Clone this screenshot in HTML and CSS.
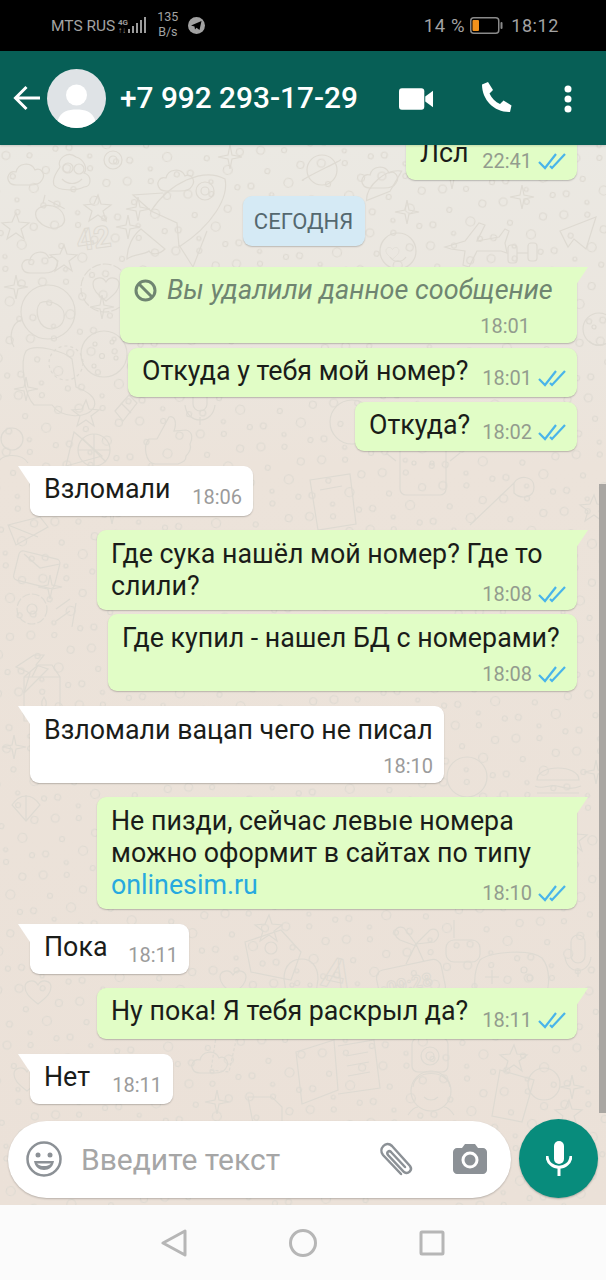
FILE: index.html
```html
<!DOCTYPE html>
<html lang="ru">
<head>
<meta charset="utf-8">
<title>WhatsApp</title>
<link rel="stylesheet" href="styles.css">
</head>
<body>
<div class="app">
  <div class="status">
    <span class="carrier">MTS RUS</span>
    <svg class="signal" width="30" height="20" viewBox="0 0 30 20"><text x="1" y="9" class="net">4G</text><text x="1" y="17" class="net">↑↓</text><path d="M12 13v4M16 10v7M20 7v10M24 4v13M28 1v16" stroke="#9c9c9c" stroke-width="2" fill="none"/></svg>
    <span class="speed">135<br>B/s</span>
    <svg class="tg" width="17" height="17" viewBox="0 0 17 17"><circle cx="8.500" cy="8.500" r="8.500" fill="#a2a2a2"/><path d="M3 8.500l10.500-4.500-2 9-3-2.200-1.500 1.700-.5-3z" fill="#000"/></svg>
    <span class="grow"></span>
    <span class="pct">14 %</span>
    <svg class="battery" width="33" height="17" viewBox="0 0 33 17"><rect x=".75" y=".75" width="28" height="15.500" rx="3" fill="none" stroke="#8a8a8a" stroke-width="1.500"/><rect x="2.500" y="3" width="6.500" height="11" rx="1" fill="#f2921c"/><rect x="30.500" y="5" width="2" height="7" rx="1" fill="#8a8a8a"/></svg>
    <span class="clock">18:12</span>
  </div>

  <header class="head">
    <svg class="back" width="28" height="26" viewBox="0 0 28 26"><path d="M27 13H3M13.500 2 2.500 13l11 11" fill="none" stroke="#fff" stroke-width="3"/></svg>
    <svg class="avatar" width="59" height="59" viewBox="0 0 59 59"><circle cx="29.500" cy="29.500" r="29.500" fill="#dfe3e6"/><circle cx="29.500" cy="26" r="10.500" fill="#fff"/><path d="M10.500 52c3-10 11-11.500 19-11.500s16 1.500 19 11.500a29.500 29.500 0 0 1-38 0z" fill="#fff"/></svg>
    <h1 class="title">+7 992 293-17-29</h1>
    <svg class="video" width="35" height="23" viewBox="0 0 36 23"><rect x="0" y="0" width="26" height="22" rx="3" fill="#fff"/><path d="M27 8.500 35 2.500v17l-8-6z" fill="#fff"/></svg>
    <svg class="phone" width="32" height="32" viewBox="0 0 32 32"><path d="M1 3.500 7 1l5 8-3.500 3.500c2 4.500 6 8.500 10.500 10.500L22.500 19.500l8 5-1.500 6.500C13.500 31.500 1 19 1 3.500z" fill="#fff"/></svg>
    <svg class="dots" width="10" height="28" viewBox="0 0 10 28"><circle cx="5" cy="4" r="3.500" fill="#fff"/><circle cx="5" cy="14" r="3.500" fill="#fff"/><circle cx="5" cy="24" r="3.500" fill="#fff"/></svg>
  </header>

  <main class="chat">
    <svg class="wall" width="606" height="1060" viewBox="0 0 606 1060">
      <defs>
        <pattern id="specks" width="62" height="58" patternUnits="userSpaceOnUse" patternTransform="rotate(12)">
          <circle cx="8" cy="9" r="4"/><circle cx="31" cy="4" r="2.500"/><circle cx="50" cy="15" r="3.500"/><circle cx="19" cy="28" r="2.500"/><circle cx="42" cy="35" r="4.500"/><circle cx="6" cy="46" r="3"/><circle cx="28" cy="50" r="2"/><circle cx="55" cy="50" r="2.500"/>
        </pattern>
        <path id="cloud" d="M4 26c-5-6 0-13 6-11 2-9 15-11 19-2 6-3 11 4 7 10-2 4-7 5-12 5H11c-3 0-5 0-7-2z"/>
        <path id="star" d="M14 0l3 9 10 1-8 6 3 10-8-6-9 6 3-10-8-6 10-1z"/>
        <path id="spark" d="M12 0l2 10 10 2-10 2-2 10-2-10-10-2 10-2z"/>
        <path id="heart" d="M13 24C4 17 0 13 0 7c0-6 9-9 13-2 4-7 13-4 13 2 0 6-4 10-13 17z"/>
        <g id="book"><path d="M0 12 38 0l4 50-36 14zM42 6l36-6 6 48-42 6"/><path d="M50 16l22-4M51 26l22-4M52 36l22-4"/></g>
        <g id="face"><circle cx="23" cy="26" r="20"/><path d="M5 22C6 4 40 4 42 22M0 50c4-6 8-8 10-8M46 50c-4-6-8-8-10-8"/><path d="M16 32c4 4 10 4 14 0"/></g>
        <g id="pad"><path d="M4 10c10-8 50-12 62-2 10 12 8 38-2 48-6 2-12-10-16-14H24C18 46 10 58 4 54-4 40-2 20 4 10z"/><path d="M16 20v14M9 27h14"/><circle cx="48" cy="20" r="3"/><circle cx="54" cy="28" r="3"/></g>
        <g id="burger"><path d="M2 20C2 4 44 4 44 20zM0 26c8 4 14-2 22 0s14 4 24 0M2 33h42M4 40h38l-4 6H8z"/></g>
      </defs>
      <rect width="606" height="1060" fill="url(#specks)"/>
      <g class="doodle">
        <use href="#cloud" x="6" y="12"/><use href="#cloud" x="156" y="18"/><use href="#cloud" x="20" y="100"/><use href="#cloud" x="360" y="15" />
        <g transform="translate(52 8)"><path d="M8 14C4 6 16-3 24 4c8 2 12 12 8 16 8 2 8 14 0 14-8 4-26 4-30-2-2-6 2-12 6-18z"/><circle cx="16" cy="15" r="5"/><circle cx="27" cy="16" r="5"/><path d="M10 26c6 6 14 6 20 0"/></g>
        <g transform="translate(103 4)"><circle cx="10" cy="11" r="9"/><circle cx="10" cy="11" r="4"/></g>
        <use href="#star" x="84" y="50"/><use href="#star" x="2" y="68"/><use href="#spark" x="126" y="52"/><use href="#spark" x="116" y="70"/><use href="#spark" x="218" y="0"/><use href="#star" x="50" y="100"/><use href="#spark" x="4" y="130"/><use href="#spark" x="90" y="150"/>
        <g transform="translate(135 28)"><path d="M16 38C34 10 68-6 90 6c4 18-12 46-46 68L42 50z"/><circle cx="70" cy="18" r="9"/><circle cx="70" cy="18" r="4"/><path d="M16 38-2 22l30-2M44 72l14 22 14-36M6 56c-8 6-14 18-14 30 8-6 18-4 22-8 2 4 10 4 16-2z"/></g>
        <text x="78" y="106" class="dtext" transform="rotate(-8 78 106)">42</text>
        <g transform="translate(36 18) rotate(40 12 50)"><path d="M2 52c2-8 14-16 24-10s2 18-8 20-18-2-16-10zM4 40l18-4M2 46l-4-8"/></g>
        <g transform="translate(80 118)"><circle cx="25" cy="25" r="24" stroke-dasharray="9 2"/><use href="#heart" x="13" y="14"/></g>
        <g transform="translate(6 140)"><circle cx="42" cy="27" r="27"/><path d="M34 18c-6 8-2 26 12 26 14-2 16-18 6-24-6-4-14-4-18-2zM15 35C6 38 2 52 8 62M20 66c-6 10-2 44 8 54h18c10 14 36 14 42 2 4-10-8-16-18-20l-4-28c-8-8-38-16-46-8z"/><circle cx="60" cy="78" r="17" stroke-dasharray="3 3"/></g>
        <g transform="translate(80 185)"><circle cx="24" cy="24" r="23"/><circle cx="15" cy="14" r="2"/><circle cx="32" cy="12" r="2"/><circle cx="22" cy="26" r="2.500"/><circle cx="36" cy="28" r="2"/><circle cx="14" cy="36" r="2"/></g>
        <use href="#spark" x="14" y="232"/><use href="#star" x="72" y="255"/>
        <g transform="translate(145 270)"><path d="M12 24 24 2c6-2 8 6 5 14l12-1c8 2 6 10 4 14 2 6-2 10-4 12 0 6-4 6-8 8H10C0 48-2 30 4 24z"/></g>
        <g transform="translate(185 240)"><rect x="8" y="0" width="14" height="26" rx="7"/><path d="M0 20c2 20 28 20 30 0M15 32v8"/></g>
        <g transform="translate(60 285)"><path d="M14 2 42 26 6 36z"/><circle cx="34" cy="20" r="16"/><path d="M34 4v32M18 20h32M22 8l24 24"/></g>
        <g transform="translate(115 250)"><path d="M0 16 14 0l8 8L8 26z"/><path d="M6 8l10 10"/></g>
        <g transform="translate(0 282)"><circle cx="12" cy="12" r="11"/><path d="M-2 36c4-10 24-10 30 0"/></g>

        <g transform="translate(300 5)"><circle cx="22" cy="20" r="15"/><path d="M4 30C-8 34 46 8 40 10"/></g>
        <g transform="translate(360 48) rotate(-40)"><path d="M0 10c10-12 36-12 46 0l-22 8z"/></g>
        <use href="#spark" x="440" y="20"/><use href="#star" x="540" y="8"/><use href="#spark" x="395" y="55"/><use href="#spark" x="510" y="40"/>
        <g transform="translate(376 92)"><circle cx="22" cy="14" r="18"/><use href="#heart" x="6" y="6" transform="scale(.5) translate(14 14)"/><path d="M14 20c4 6 12 6 16 0"/></g>
        <g transform="translate(445 78)"><path d="M0 24 20 18 34 0l6 2-8 16 22-4 6-8 4 2-4 12 2 10-6-2-24 0-8 16-6-2 2-14-14-2z"/></g>
        <g transform="translate(470 92)"><rect x="38" y="8" width="9" height="18" rx="3"/><rect x="58" y="6" width="9" height="18" rx="3"/><path d="M47 16h11"/></g>
        <g transform="translate(560 72)"><path d="M0 14 36 0 26 32 14 22l-6 8z"/></g>
        <g transform="translate(585 170)"><circle cx="14" cy="14" r="16"/><circle cx="9" cy="12" r="2"/><path d="M4 26c6 6 14 6 20 0"/></g>
        <g transform="translate(330 255)"><circle cx="22" cy="22" r="22"/></g>
        <g transform="translate(400 300)"><rect x="0" y="0" width="46" height="50" rx="6"/><path d="M12 0V-10M34 0v-10M-4 16-14 8M50 16l10-8"/><circle cx="14" cy="18" r="2"/><circle cx="32" cy="18" r="2"/></g>
        <g transform="translate(310 335)"><path d="M0 0 40-6 46 44 8 50zM10 10l22-4"/></g>
        <g transform="translate(470 330)"><path d="M0 50 44 8M44 8c4-8 20-8 20 4s-14 12-20 6z"/></g>
        <g transform="translate(580 350)"><use href="#star" x="0" y="0"/></g>
        <use href="#star" x="36" y="332"/><use href="#spark" x="100" y="355"/>
        <g transform="translate(8 370)"><path d="M0 10 32 2 40 12 8 30zM0 10l30 12"/></g>
        <g transform="translate(20 405)"><rect width="42" height="30" rx="4" transform="rotate(14)"/><path d="M4 4l16 14L40 14" /></g>
        <g transform="translate(16 448)"><circle cx="16" cy="16" r="15" stroke-dasharray="8 2"/><circle cx="16" cy="16" r="5"/></g>
        <use href="#spark" x="38" y="430"/>
        <g transform="translate(56 450)"><path d="M0 14 14 4M0 26l14-10M16 32l4-24"/></g>
        <g transform="translate(16 510)"><path d="M18 0 0 12l14 6-6 20 24-24-12-4 8-10z"/></g>
        <g transform="translate(20 518)"><path d="M4 14 18 2h14l8 12v44H4z"/><path d="M4 14h36M18 2l-6 12"/><path d="M24 34c-4 6-2 10 0 10s4-4 0-10z"/></g>
        <use href="#spark" x="2" y="590"/><use href="#spark" x="584" y="615"/>
        <g transform="translate(535 615)"><use href="#burger"/></g>
        <g transform="translate(485 650)"><path d="M10 10c-6 10-10 22-10 30h26C24 28 22 16 16 10z"/><circle cx="13" cy="6" r="4"/></g>
        <use href="#star" x="560" y="680"/>
        <g transform="translate(12 640)"><path d="M0 20C8 8 20 8 28 20L14 36z"/><path d="M14 36V10"/></g>
        <g transform="translate(445 610)"><circle cx="22" cy="22" r="20"/></g>
        <g transform="translate(255 770)"><use href="#star"/></g>
        <g transform="translate(245 785)"><path d="M0 12 36 0l20 22-10 28-40-8z"/><circle cx="26" cy="18" r="6"/></g>
        <text x="320" y="840" class="dtext big" transform="rotate(12 320 840)">A</text>
        <g transform="translate(280 810)"><path d="M4 24C4 8 14 4 22 4s16 6 16 20l-2 14H6z"/><circle cx="12" cy="30" r="2"/><circle cx="30" cy="30" r="2"/></g>
        <g transform="translate(392 775)"><path d="M24 24 12 8C4 4-2 14 8 20l16 6zM24 24 38 10c8-4 12 6 4 12zM24 24 14 44M24 24 32 42"/></g>
        <g transform="translate(434 775)"><rect width="34" height="22" rx="8" transform="translate(12 20)"/><path d="M20 0v18"/></g>
        <g transform="translate(378 820)"><rect width="66" height="36" rx="8" transform="rotate(-12 30 18)"/><text x="8" y="25" class="dtext small" transform="rotate(-12 30 18)">09:28</text></g>
        <g transform="translate(476 805)"><use href="#pad"/></g>
        <g transform="translate(565 790)"><rect x="6" y="0" width="14" height="28" rx="7"/><path d="M0 22c2 18 24 18 26 0M13 34v8"/></g>
        <g transform="translate(280 775)"><use href="#heart" transform="translate(-60 50)"/></g>
        <g transform="translate(25 835)"><use href="#heart"/></g>
        <use href="#cloud" x="190" y="900"/><use href="#spark" x="205" y="945"/><use href="#star" x="500" y="900"/><use href="#spark" x="560" y="930"/>
        <g transform="translate(296 895)"><use href="#book"/></g>
        <g transform="translate(408 920)"><use href="#face"/></g>
        <g transform="translate(248 950)"><path d="M0 2h24l10 10v32H8z"/></g>
        <g transform="translate(412 893)"><rect width="36" height="34" rx="6"/><circle cx="18" cy="18" r="9"/><circle cx="18" cy="18" r="4"/></g>
        <g transform="translate(492 925)"><path d="M8 0 42 10 30 52 0 46z"/><circle cx="52" cy="14" r="16"/></g>
        <g transform="translate(205 885)"><path d="M12 0 6 40 24 42l8-36z" stroke-dasharray="3 2"/></g>
        <g transform="translate(46 910)"><path d="M0 36 14 0h20l6 36z"/></g>
        <use href="#heart" x="14" y="922"/><use href="#star" x="555" y="955"/>
      </g>
    </svg>

    <section class="thread">
      <div class="bubble out first w-171"><p class="text">Лсл</p><span class="meta">22:41 <svg class="tick" width="28" height="18" viewBox="0 0 28 18"><path d="M1 10l6 6L18 2M12 14l2 2L27 2"/></svg></span></div>

      <div class="day">СЕГОДНЯ</div>

      <div class="bubble out tail stack deleted w-457">
        <p class="text gone"><svg class="ban" width="23" height="23" viewBox="0 0 23 23"><circle cx="11.500" cy="11.500" r="9.500"/><path d="M5 5l13 13"/></svg>Вы удалили данное сообщение</p>
        <span class="meta">18:01</span>
      </div>
      <div class="bubble out same w-449"><p class="text">Откуда у тебя мой номер?</p><span class="meta">18:01 <svg class="tick" width="28" height="18" viewBox="0 0 28 18"><path d="M1 10l6 6L18 2M12 14l2 2L27 2"/></svg></span></div>
      <div class="bubble out same w-222"><p class="text">Откуда?</p><span class="meta">18:02 <svg class="tick" width="28" height="18" viewBox="0 0 28 18"><path d="M1 10l6 6L18 2M12 14l2 2L27 2"/></svg></span></div>

      <div class="bubble in tail w-223"><p class="text">Взломали</p><span class="meta">18:06</span></div>

      <div class="bubble out tail wrap w-480">
        <p class="text">Где сука нашёл мой номер? Где то</p>
        <div class="last"><p class="text">слили?</p><span class="meta">18:08 <svg class="tick" width="28" height="18" viewBox="0 0 28 18"><path d="M1 10l6 6L18 2M12 14l2 2L27 2"/></svg></span></div>
      </div>
      <div class="bubble out near stack w-469"><p class="text">Где купил - нашел БД с номерами?</p><span class="meta">18:08 <svg class="tick" width="28" height="18" viewBox="0 0 28 18"><path d="M1 10l6 6L18 2M12 14l2 2L27 2"/></svg></span></div>

      <div class="bubble in tail stack w-414"><p class="text">Взломали вацап чего не писал</p><span class="meta">18:10</span></div>

      <div class="bubble out tail wrap w-480">
        <p class="text">Не пизди, сейчас левые номера<br>можно оформит в сайтах по типу</p>
        <div class="last"><p class="text"><a class="link">onlinesim.ru</a></p><span class="meta">18:10 <svg class="tick" width="28" height="18" viewBox="0 0 28 18"><path d="M1 10l6 6L18 2M12 14l2 2L27 2"/></svg></span></div>
      </div>

      <div class="bubble in tail w-159"><p class="text">Пока</p><span class="meta">18:11</span></div>
      <div class="bubble out tail tall w-480"><p class="text">Ну пока! Я тебя раскрыл да?</p><span class="meta">18:11 <svg class="tick" width="28" height="18" viewBox="0 0 28 18"><path d="M1 10l6 6L18 2M12 14l2 2L27 2"/></svg></span></div>
      <div class="bubble in tail w-143"><p class="text">Нет</p><span class="meta">18:11</span></div>
    </section>

    <div class="scroll"></div>

    <footer class="composer">
      <div class="field">
        <svg class="emoji" width="36" height="36" viewBox="0 0 36 36"><circle cx="18" cy="18" r="16.500" fill="none" stroke="#8c9196" stroke-width="2.500"/><circle cx="12" cy="14" r="2.500" fill="#8c9196"/><circle cx="24" cy="14" r="2.500" fill="#8c9196"/><path d="M8 20h20c-1 6-5 9-10 9s-9-3-10-9z" fill="#8c9196"/><path d="M11 22.500h14c-2 2-4 2.500-7 2.500s-5-.5-7-2.500z" fill="#fff"/></svg>
        <span class="placeholder">Введите текст</span>
        <svg class="clip" width="37" height="37" viewBox="0 0 37 37"><path d="M24 33 6 14C1 8 9-1 15 5l18 20c3 4-2 9-6 6L11 14c-2-3 1-5 3-3l14 15" fill="none" stroke="#8c9196" stroke-width="2.500" stroke-linecap="round"/></svg>
        <svg class="camera" width="34" height="32" viewBox="0 0 34 32"><path d="M4 5h5l3-4h10l3 4h5c2 0 4 2 4 4v18c0 2-2 4-4 4H4c-2 0-4-2-4-4V9c0-2 2-4 4-4z" fill="#8c9196"/><circle cx="17" cy="17" r="8.500" fill="#fff"/><circle cx="17" cy="17" r="5.500" fill="#8c9196"/></svg>
      </div>
      <button class="mic"><svg width="26" height="36" viewBox="0 0 26 36"><rect x="8" y="0" width="10" height="23" rx="5" fill="#fff"/><path d="M1 15c1 15 23 15 24 0" fill="none" stroke="#fff" stroke-width="3"/><path d="M13 25v10" stroke="#fff" stroke-width="3"/></svg></button>
    </footer>
  </main>

  <nav class="nav">
    <svg width="26" height="28" viewBox="0 0 26 28"><path d="M24 2v24L2 14z"/></svg>
    <svg width="28" height="28" viewBox="0 0 28 28"><circle cx="14" cy="14" r="12.500"/></svg>
    <svg width="26" height="26" viewBox="0 0 26 26"><rect x="2" y="2" width="22" height="22" rx="1"/></svg>
  </nav>
</div>
</body>
</html>
```

FILE: styles.css
```css
* { box-sizing: border-box; }
html, body { margin: 0; padding: 0; }
body { font-family: Roboto, "Liberation Sans", sans-serif; background: #000; }
.app { width: 606px; height: 1280px; display: flex; flex-direction: column; overflow: hidden; }

.status { height: 51px; flex: none; background: #000; color: #a3a3a3; display: flex; align-items: center; padding: 0 47px 0 51px; }
.carrier { font-size: 15.500px; }
.signal { margin-left: 2px; }
.net { font: 700 8px Roboto, sans-serif; fill: #9c9c9c; }
.speed { font-size: 12.500px; line-height: 15px; margin: 0 0 3px 10px; text-align: center; }
.tg { margin-left: 10px; }
.grow { flex: 1; }
.pct { font-size: 18.500px; letter-spacing: .6px; }
.battery { margin-left: 5px; }
.clock { font-size: 18px; letter-spacing: .6px; margin-left: 8px; }

.head { height: 94px; flex: none; background: #075f56; display: flex; align-items: center; padding-left: 13px; position: relative; z-index: 3; box-shadow: 0 1px 2px rgba(0,0,0,.15); }
.back { flex: none; }
.avatar { margin-left: 6px; flex: none; }
.title { flex: 1; margin: 0 0 0 14px; color: #fff; font-size: 29.800px; font-weight: 500; line-height: 1; white-space: nowrap; }
.video { margin-right: 47px; margin-top: 2px; }
.phone { margin-right: 50px; margin-top: -2px; }
.dots { margin-right: 33px; margin-top: 1px; }

.chat { flex: 1; position: relative; overflow: hidden; display: flex; flex-direction: column; background: linear-gradient(180deg, #ebe9e3 0, #ebe6df 180px, #ece3da 320px, #ebe1d8 100%); }
.wall { position: absolute; left: 0; top: 0; }
#specks circle, .doodle { fill: none; stroke: #dedad2; stroke-width: 1.200; }
.dtext { font: 700 30px Roboto, sans-serif; fill: none; stroke: #dedad2; stroke-width: 1; }
.dtext.big { font-size: 42px; }
.dtext.small { font-size: 18px; }

.thread { flex: 1; min-height: 0; position: relative; display: flex; flex-direction: column; padding: 0 29px 0 30px; }
.bubble { position: relative; flex: none; display: flex; align-items: flex-start; justify-content: space-between; min-height: 50px; padding: 7px 11px 8px 14px; margin-top: 14px; border-radius: 9px; box-shadow: 0 1px 1.500px rgba(0,0,0,.22); color: #1a1c19; }
.out { align-self: flex-end; background: #e1fdc6; }
.in { align-self: flex-start; background: #fff; }
.first { margin-top: -15px; height: 50px; }
.same { margin-top: 5px; min-height: 49px; height: 49px; }
.near { margin-top: 4px; }
.tall { min-height: 51px; }
.text { margin: 0; font-size: 26.800px; line-height: 32px; white-space: nowrap; }
.meta { flex: none; align-self: flex-end; display: inline-flex; align-items: center; gap: 6px; font-size: 20px; line-height: 24px; color: #939c8e; margin-bottom: -1px; }
.in .meta { color: #9b9b9b; }
.tick { fill: none; stroke: #49b4ea; stroke-width: 2.200; }
.stack { flex-direction: column; align-items: stretch; height: 77px; padding-top: 8px; }
.stack .meta { margin-bottom: -3px; }
.wrap { display: block; padding-top: 8px; padding-bottom: 8px; }
.last { display: flex; justify-content: space-between; align-items: flex-start; height: 32px; }
.last .meta { margin-bottom: -4px; }
.link { color: #27a9df; }
.gone { color: #6f8571; font-style: italic; font-size: 27px; display: flex; align-items: center; gap: 10px; }
.ban { fill: none; stroke: #6f8571; stroke-width: 3; flex: none; }
.deleted .meta { margin-right: 36px; }

.w-171 { width: 171px; }
.w-457 { width: 457px; }
.w-449 { width: 449px; }
.w-222 { width: 222px; }
.w-223 { width: 223px; }
.w-480 { width: 480px; }
.w-469 { width: 469px; }
.w-414 { width: 414px; }
.w-159 { width: 159px; }
.w-143 { width: 143px; }

.tail.out { border-top-right-radius: 0; margin-top: 14px; }
.tail.in { border-top-left-radius: 0; margin-top: 15px; }
.tail::after { content: ""; position: absolute; top: 0; width: 12px; height: 18px; background: inherit; }
.tail.out::after { right: -11px; clip-path: polygon(0 0, 100% 0, 0 100%); }
.tail.in::after { left: -12px; clip-path: polygon(0 0, 100% 0, 100% 100%); }

.tail.deleted { margin-top: 21px; height: 76px; padding-top: 7px; }
.day { align-self: center; margin-top: 16px; width: 122px; height: 50px; display: flex; align-items: center; justify-content: center; background: #d5eaf5; color: #54686f; font-size: 22px; border-radius: 9px; box-shadow: 0 1px 1.500px rgba(0,0,0,.2); }

.scroll { position: absolute; right: 0; top: 339px; width: 7px; height: 629px; background: #a9a6a2; }

.composer { flex: none; position: relative; display: flex; align-items: center; justify-content: space-between; padding: 0 8px 7px; height: 92px; }
.field { width: 503px; height: 77px; margin-top: 7px; border-radius: 39px; background: #fff; box-shadow: 0 1px 2px rgba(0,0,0,.22); display: flex; align-items: center; padding: 0 24px 0 18px; }
.emoji { flex: none; }
.placeholder { flex: 1; margin-left: 19px; font-size: 30px; color: #a6a6a6; }
.clip { flex: none; margin-right: 39px; }
.camera { flex: none; }
.mic { width: 79px; height: 79px; margin-top: 6px; border: 0; padding: 0; border-radius: 50%; background: #088c7c; box-shadow: 0 1px 2px rgba(0,0,0,.25); display: flex; align-items: center; justify-content: center; }

.nav { height: 75px; flex: none; background: #fbfbfb; display: flex; align-items: center; justify-content: center; gap: 102px; }
.nav svg { fill: none; stroke: #b6b6b6; stroke-width: 3; stroke-linejoin: round; }
```
